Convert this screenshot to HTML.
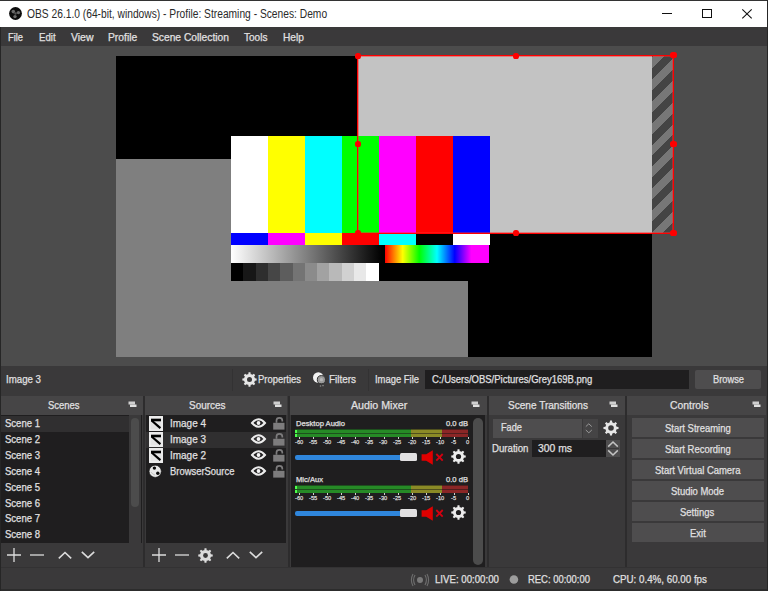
<!DOCTYPE html>
<html><head><meta charset="utf-8"><style>
html,body{margin:0;padding:0;}
body{width:768px;height:591px;position:relative;overflow:hidden;background:#3a393a;font-family:"Liberation Sans",sans-serif;}
body>div{position:absolute;box-sizing:border-box;}
.t{white-space:nowrap;line-height:1.117;transform-origin:0 0;-webkit-text-stroke:0.25px currentColor;}
</style></head><body>
<div style="left:0px;top:0px;width:768px;height:591px;background:#3a393a;"></div>
<div style="left:0px;top:0px;width:768px;height:27px;background:#ffffff;"></div>
<div style="left:0px;top:0px;width:768px;height:1px;background:#333333;"></div>
<div style="left:0px;top:27px;width:768px;height:19px;background:#3a393a;"></div>
<div style="left:0px;top:46px;width:768px;height:320px;background:#4c4c4c;"></div>
<div style="left:116px;top:56px;width:536px;height:301px;background:#000;"></div>
<div style="left:116px;top:159px;width:352px;height:198px;background:#7f7f7f;"></div>
<div style="left:358px;top:56px;width:294px;height:177px;background:#c3c3c3;"></div>
<div style="left:652px;top:56px;width:21px;height:177px;background:repeating-linear-gradient(-45deg,#444444 0 7.7px,#777777 7.7px 15.4px);"></div>
<div style="left:231px;top:136px;width:37px;height:97px;background:#ffffff;"></div>
<div style="left:268px;top:136px;width:37px;height:97px;background:#ffff00;"></div>
<div style="left:305px;top:136px;width:37px;height:97px;background:#00ffff;"></div>
<div style="left:342px;top:136px;width:37px;height:97px;background:#00ff00;"></div>
<div style="left:379px;top:136px;width:37px;height:97px;background:#ff00ff;"></div>
<div style="left:416px;top:136px;width:37px;height:97px;background:#ff0000;"></div>
<div style="left:453px;top:136px;width:37px;height:97px;background:#0000ff;"></div>
<div style="left:231px;top:233px;width:37px;height:12px;background:#0000ff;"></div>
<div style="left:268px;top:233px;width:37px;height:12px;background:#ff00ff;"></div>
<div style="left:305px;top:233px;width:37px;height:12px;background:#ffff00;"></div>
<div style="left:342px;top:233px;width:37px;height:12px;background:#ff0000;"></div>
<div style="left:379px;top:233px;width:37px;height:12px;background:#00ffff;"></div>
<div style="left:416px;top:233px;width:37px;height:12px;background:#000000;"></div>
<div style="left:453px;top:233px;width:37px;height:12px;background:#ffffff;"></div>
<div style="left:231px;top:245px;width:259px;height:36px;background:#000;"></div>
<div style="left:231px;top:245px;width:151px;height:18px;background:linear-gradient(90deg,#fff,#000);"></div>
<div style="left:385px;top:245px;width:104px;height:18px;background:linear-gradient(90deg,#ff0000,#ffff00 17%,#00ff00 33%,#00ffff 50%,#0000ff 67%,#ff00ff 83%,#ff00ff);"></div>
<div style="left:231.00px;top:263px;width:12.5px;height:18px;background:rgb(0,0,0);"></div>
<div style="left:243.30px;top:263px;width:12.5px;height:18px;background:rgb(23,23,23);"></div>
<div style="left:255.60px;top:263px;width:12.5px;height:18px;background:rgb(46,46,46);"></div>
<div style="left:267.90px;top:263px;width:12.5px;height:18px;background:rgb(70,70,70);"></div>
<div style="left:280.20px;top:263px;width:12.5px;height:18px;background:rgb(93,93,93);"></div>
<div style="left:292.50px;top:263px;width:12.5px;height:18px;background:rgb(116,116,116);"></div>
<div style="left:304.80px;top:263px;width:12.5px;height:18px;background:rgb(139,139,139);"></div>
<div style="left:317.10px;top:263px;width:12.5px;height:18px;background:rgb(162,162,162);"></div>
<div style="left:329.40px;top:263px;width:12.5px;height:18px;background:rgb(185,185,185);"></div>
<div style="left:341.70px;top:263px;width:12.5px;height:18px;background:rgb(209,209,209);"></div>
<div style="left:354.00px;top:263px;width:12.5px;height:18px;background:rgb(232,232,232);"></div>
<div style="left:366.30px;top:263px;width:12.5px;height:18px;background:rgb(255,255,255);"></div>
<div style="left:357px;top:55px;width:1px;height:179px;background:#ff0000;"></div>
<div style="left:358px;top:56px;width:1px;height:177px;background:rgba(255,40,40,0.45);"></div>
<div style="left:673px;top:55px;width:1px;height:179px;background:#ff0000;"></div>
<div style="left:672px;top:56px;width:1px;height:177px;background:rgba(255,40,40,0.45);"></div>
<div style="left:357px;top:55px;width:317px;height:1px;background:#ff0000;"></div>
<div style="left:358px;top:56px;width:315px;height:1px;background:rgba(255,40,40,0.45);"></div>
<div style="left:357px;top:233px;width:317px;height:1px;background:#ff0000;"></div>
<div style="left:358px;top:232px;width:315px;height:1px;background:rgba(255,40,40,0.45);"></div>
<div style="left:354.8px;top:52.6px;width:6.4px;height:6.4px;border-radius:40%;background:#ff0000;"></div>
<div style="left:512.8px;top:52.6px;width:6.4px;height:6.4px;border-radius:40%;background:#ff0000;"></div>
<div style="left:670.3px;top:52.1px;width:6.4px;height:6.4px;border-radius:40%;background:#ff0000;"></div>
<div style="left:354.8px;top:140.6px;width:6.4px;height:6.4px;border-radius:40%;background:#ff0000;"></div>
<div style="left:670.3px;top:140.6px;width:6.4px;height:6.4px;border-radius:40%;background:#ff0000;"></div>
<div style="left:354.8px;top:229.6px;width:6.4px;height:6.4px;border-radius:40%;background:#ff0000;"></div>
<div style="left:512.8px;top:229.6px;width:6.4px;height:6.4px;border-radius:40%;background:#ff0000;"></div>
<div style="left:670.3px;top:229.6px;width:6.4px;height:6.4px;border-radius:40%;background:#ff0000;"></div>
<svg style="position:absolute;left:8.5px;top:6.5px;overflow:visible" width="13" height="13"><circle cx="6.5" cy="6.5" r="6.4" fill="#0c0c0c"/><circle cx="4.3" cy="4.6" r="1.8" fill="#6a6a6a"/><circle cx="9.4" cy="5.6" r="1.7" fill="#6a6a6a"/><circle cx="6" cy="9.6" r="1.7" fill="#6a6a6a"/><circle cx="6.5" cy="6.5" r="1.2" fill="#555"/></svg>
<div class="t" style="left:27.00px;top:7.64px;font-size:12px;color:#2a2a2a;transform:scaleX(0.8538);-webkit-text-stroke:0;">OBS 26.1.0 (64-bit, windows) - Profile: Streaming - Scenes: Demo</div>
<div style="left:662px;top:13px;width:10px;height:1px;background:#111;"></div>
<div style="left:702px;top:9px;width:9.5px;height:9px;border:1px solid #111;"></div>
<svg style="position:absolute;left:742px;top:8.5px;overflow:visible" width="10" height="9.5"><path d="M0.3 0.3L9.7 9.3M9.7 0.3L0.3 9.3" stroke="#111" stroke-width="1.1"/></svg>
<div class="t" style="left:8.30px;top:30.84px;font-size:11px;color:#e1e0e1;transform:scaleX(0.8466);">File</div>
<div class="t" style="left:39.20px;top:30.84px;font-size:11px;color:#e1e0e1;transform:scaleX(0.8751);">Edit</div>
<div class="t" style="left:70.80px;top:30.84px;font-size:11px;color:#e1e0e1;transform:scaleX(0.9518);">View</div>
<div class="t" style="left:108.30px;top:30.84px;font-size:11px;color:#e1e0e1;transform:scaleX(0.9363);">Profile</div>
<div class="t" style="left:152.20px;top:30.84px;font-size:11px;color:#e1e0e1;transform:scaleX(0.9323);">Scene Collection</div>
<div class="t" style="left:244.30px;top:30.84px;font-size:11px;color:#e1e0e1;transform:scaleX(0.9109);">Tools</div>
<div class="t" style="left:283.00px;top:30.84px;font-size:11px;color:#e1e0e1;transform:scaleX(0.9282);">Help</div>
<div style="left:0px;top:366px;width:768px;height:30px;background:#3a393a;"></div>
<div class="t" style="left:6.00px;top:372.85px;font-size:11px;color:#e1e0e1;transform:scaleX(0.8798);">Image 3</div>
<div style="left:232px;top:369px;width:1px;height:22px;background:#333233;"></div>
<svg style="position:absolute;left:241.30px;top:370.50px;overflow:visible" width="17" height="17"><path d="M6.72 3.30 L7.32 3.13 L7.54 1.36 L9.46 1.36 L9.68 3.13 L10.28 3.30 L10.92 3.56 L11.47 3.87 L12.87 2.77 L14.23 4.13 L13.13 5.53 L13.44 6.08 L13.70 6.72 L13.87 7.32 L15.64 7.54 L15.64 9.46 L13.87 9.68 L13.70 10.28 L13.44 10.92 L13.13 11.47 L14.23 12.87 L12.87 14.23 L11.47 13.13 L10.92 13.44 L10.28 13.70 L9.68 13.87 L9.46 15.64 L7.54 15.64 L7.32 13.87 L6.72 13.70 L6.08 13.44 L5.53 13.13 L4.13 14.23 L2.77 12.87 L3.87 11.47 L3.56 10.92 L3.30 10.28 L3.13 9.68 L1.36 9.46 L1.36 7.54 L3.13 7.32 L3.30 6.72 L3.56 6.08 L3.87 5.53 L2.77 4.13 L4.13 2.77 L5.53 3.87 L6.08 3.56Z" fill="#e6e6e6"/><circle cx="8.5" cy="8.5" r="2.50" fill="#3a393a"/></svg>
<div class="t" style="left:258.00px;top:372.85px;font-size:11px;color:#e1e0e1;transform:scaleX(0.8573);">Properties</div>
<svg style="position:absolute;left:312px;top:371px;overflow:visible" width="16" height="18"><circle cx="6.3" cy="6.6" r="5.3" fill="#f2f2f2"/><circle cx="9.4" cy="8.7" r="4.1" fill="#9a9a9a" stroke="#303030" stroke-width="1"/><circle cx="9.4" cy="8.7" r="1.6" fill="#b8b8b8"/><circle cx="8.5" cy="15" r="0.8" fill="#8a8a8a"/><circle cx="11" cy="14.6" r="0.8" fill="#8a8a8a"/></svg>
<div class="t" style="left:329.00px;top:372.85px;font-size:11px;color:#e1e0e1;transform:scaleX(0.9019);">Filters</div>
<div style="left:368px;top:369px;width:1px;height:22px;background:#333233;"></div>
<div class="t" style="left:374.50px;top:372.85px;font-size:11px;color:#e1e0e1;transform:scaleX(0.8564);">Image File</div>
<div style="left:425px;top:370px;width:264px;height:19px;background:#1f1e1f;"></div>
<div class="t" style="left:432.00px;top:372.85px;font-size:11px;color:#e1e0e1;transform:scaleX(0.8630);">C:/Users/OBS/Pictures/Grey169B.png</div>
<div style="left:695px;top:370px;width:66px;height:19px;background:#4e4d4e;border-radius:2px;"></div>
<div class="t" style="left:713.00px;top:372.85px;font-size:11px;color:#e1e0e1;transform:scaleX(0.8450);">Browse</div>
<div style="left:1px;top:396px;width:142px;height:19px;background:#464546;"></div>
<div class="t" style="left:47.65px;top:398.55px;font-size:11px;color:#e1e0e1;transform:scaleX(0.8579);">Scenes</div>
<svg style="position:absolute;left:128px;top:401px;overflow:visible" width="9" height="8"><rect x="0.5" y="0.5" width="6.5" height="3" fill="#cfcfcf"/><rect x="2" y="3.5" width="6.5" height="2.5" fill="#e0e0e0"/></svg>
<div style="left:145px;top:396px;width:142px;height:19px;background:#464546;"></div>
<div class="t" style="left:189.45px;top:398.55px;font-size:11px;color:#e1e0e1;transform:scaleX(0.9040);">Sources</div>
<svg style="position:absolute;left:273px;top:401px;overflow:visible" width="9" height="8"><rect x="0.5" y="0.5" width="6.5" height="3" fill="#cfcfcf"/><rect x="2" y="3.5" width="6.5" height="2.5" fill="#e0e0e0"/></svg>
<div style="left:290px;top:396px;width:197px;height:19px;background:#464546;"></div>
<div class="t" style="left:351.35px;top:398.55px;font-size:11px;color:#e1e0e1;transform:scaleX(0.9691);">Audio Mixer</div>
<svg style="position:absolute;left:471px;top:401px;overflow:visible" width="9" height="8"><rect x="0.5" y="0.5" width="6.5" height="3" fill="#cfcfcf"/><rect x="2" y="3.5" width="6.5" height="2.5" fill="#e0e0e0"/></svg>
<div style="left:489px;top:396px;width:136px;height:19px;background:#464546;"></div>
<div class="t" style="left:508.40px;top:398.55px;font-size:11px;color:#e1e0e1;transform:scaleX(0.9144);">Scene Transitions</div>
<svg style="position:absolute;left:608.5px;top:401px;overflow:visible" width="9" height="8"><rect x="0.5" y="0.5" width="6.5" height="3" fill="#cfcfcf"/><rect x="2" y="3.5" width="6.5" height="2.5" fill="#e0e0e0"/></svg>
<div style="left:627px;top:396px;width:139px;height:19px;background:#464546;"></div>
<div class="t" style="left:669.90px;top:398.55px;font-size:11px;color:#e1e0e1;transform:scaleX(0.9422);">Controls</div>
<svg style="position:absolute;left:752px;top:401px;overflow:visible" width="9" height="8"><rect x="0.5" y="0.5" width="6.5" height="3" fill="#cfcfcf"/><rect x="2" y="3.5" width="6.5" height="2.5" fill="#e0e0e0"/></svg>
<div style="left:143px;top:396px;width:2px;height:171px;background:#2d2c2d;"></div>
<div style="left:288px;top:396px;width:2px;height:171px;background:#2d2c2d;"></div>
<div style="left:487px;top:396px;width:2px;height:171px;background:#2d2c2d;"></div>
<div style="left:625px;top:396px;width:2px;height:171px;background:#2d2c2d;"></div>
<div style="left:1px;top:415px;width:141px;height:128px;background:#1f1e1f;"></div>
<div style="left:1px;top:416px;width:128px;height:15.85px;background:#302f30;"></div>
<div style="left:129px;top:415px;width:12px;height:128px;background:#3a393a;"></div>
<div style="left:131px;top:418px;width:8px;height:89px;background:#4c4c4c;border-radius:4px;"></div>
<div class="t" style="left:4.60px;top:417.35px;font-size:11px;color:#e1e0e1;transform:scaleX(0.8662);">Scene 1</div>
<div class="t" style="left:4.60px;top:433.20px;font-size:11px;color:#e1e0e1;transform:scaleX(0.8662);">Scene 2</div>
<div class="t" style="left:4.60px;top:449.05px;font-size:11px;color:#e1e0e1;transform:scaleX(0.8662);">Scene 3</div>
<div class="t" style="left:4.60px;top:464.90px;font-size:11px;color:#e1e0e1;transform:scaleX(0.8662);">Scene 4</div>
<div class="t" style="left:4.60px;top:480.75px;font-size:11px;color:#e1e0e1;transform:scaleX(0.8662);">Scene 5</div>
<div class="t" style="left:4.60px;top:496.60px;font-size:11px;color:#e1e0e1;transform:scaleX(0.8662);">Scene 6</div>
<div class="t" style="left:4.60px;top:512.44px;font-size:11px;color:#e1e0e1;transform:scaleX(0.8662);">Scene 7</div>
<div class="t" style="left:4.60px;top:528.29px;font-size:11px;color:#e1e0e1;transform:scaleX(0.8662);">Scene 8</div>
<svg style="position:absolute;left:7px;top:548px;overflow:visible" width="14" height="14"><path d="M7 0V14M0 7H14" stroke="#dcdcdc" stroke-width="1.3"/></svg>
<svg style="position:absolute;left:30px;top:548px;overflow:visible" width="14" height="14"><path d="M0 7H14" stroke="#dcdcdc" stroke-width="1.3"/></svg>
<svg style="position:absolute;left:58px;top:548px;overflow:visible" width="14" height="14"><path d="M0.8 10.3L7 4.5L13.2 10.3" fill="none" stroke="#dcdcdc" stroke-width="1.6"/></svg>
<svg style="position:absolute;left:81px;top:548px;overflow:visible" width="14" height="14"><path d="M0.8 3.9L7 9.7L13.2 3.9" fill="none" stroke="#dcdcdc" stroke-width="1.6"/></svg>
<div style="left:146px;top:415px;width:140px;height:128px;background:#1f1e1f;"></div>
<div style="left:146px;top:431.85px;width:140px;height:15.85px;background:#302f30;"></div>
<svg style="position:absolute;left:149px;top:416.0px;overflow:visible" width="14" height="15"><rect x="0" y="0" width="14" height="15" fill="#e4e4e4"/><path d="M2 4H12" stroke="#000" stroke-width="2.6"/><path d="M2.6 4.5L11.4 12.2" stroke="#000" stroke-width="2.2"/><rect x="1" y="1" width="12" height="13" fill="none" stroke="#f2f2f2" stroke-width="1"/></svg>
<div class="t" style="left:170.40px;top:417.15px;font-size:11px;color:#e1e0e1;transform:scaleX(0.9049);">Image 4</div>
<svg style="position:absolute;left:149px;top:431.85px;overflow:visible" width="14" height="15"><rect x="0" y="0" width="14" height="15" fill="#e4e4e4"/><path d="M2 4H12" stroke="#000" stroke-width="2.6"/><path d="M2.6 4.5L11.4 12.2" stroke="#000" stroke-width="2.2"/><rect x="1" y="1" width="12" height="13" fill="none" stroke="#f2f2f2" stroke-width="1"/></svg>
<div class="t" style="left:170.40px;top:433.00px;font-size:11px;color:#e1e0e1;transform:scaleX(0.9049);">Image 3</div>
<svg style="position:absolute;left:149px;top:447.7px;overflow:visible" width="14" height="15"><rect x="0" y="0" width="14" height="15" fill="#e4e4e4"/><path d="M2 4H12" stroke="#000" stroke-width="2.6"/><path d="M2.6 4.5L11.4 12.2" stroke="#000" stroke-width="2.2"/><rect x="1" y="1" width="12" height="13" fill="none" stroke="#f2f2f2" stroke-width="1"/></svg>
<div class="t" style="left:170.40px;top:448.85px;font-size:11px;color:#e1e0e1;transform:scaleX(0.9049);">Image 2</div>
<svg style="position:absolute;left:148px;top:464px;overflow:visible" width="14" height="14"><circle cx="7.2" cy="7.3" r="6.1" fill="#e8e8e8" stroke="#111" stroke-width="0.6"/><circle cx="6.4" cy="4.1" r="1.7" fill="#0a0a0a"/><circle cx="9.8" cy="9.3" r="1.7" fill="#0a0a0a"/><path d="M3 8 Q4.5 10.5 7 11" fill="none" stroke="#bbb" stroke-width="0.8"/></svg>
<div class="t" style="left:170.40px;top:464.75px;font-size:11px;color:#e1e0e1;transform:scaleX(0.8562);">BrowserSource</div>
<svg style="position:absolute;left:251.10000000000002px;top:418.4px;overflow:visible" width="15" height="10"><path d="M1 5 Q7.5 -2.4 14 5 Q7.5 12.4 1 5Z" fill="none" stroke="#ececec" stroke-width="2"/><circle cx="7.5" cy="5" r="1.9" fill="#f4f4f4"/></svg>
<svg style="position:absolute;left:273px;top:417.0px;overflow:visible" width="12" height="13"><rect x="0.2" y="5.8" width="11.3" height="6.8" fill="#7d7c7d"/><path d="M3.5 5.8V3.4A2.9 2.6 0 0 1 9.3 3.4V4.5" fill="none" stroke="#7d7c7d" stroke-width="1.7"/></svg>
<svg style="position:absolute;left:251.10000000000002px;top:434.25px;overflow:visible" width="15" height="10"><path d="M1 5 Q7.5 -2.4 14 5 Q7.5 12.4 1 5Z" fill="none" stroke="#ececec" stroke-width="2"/><circle cx="7.5" cy="5" r="1.9" fill="#f4f4f4"/></svg>
<svg style="position:absolute;left:273px;top:432.85px;overflow:visible" width="12" height="13"><rect x="0.2" y="5.8" width="11.3" height="6.8" fill="#7d7c7d"/><path d="M3.5 5.8V3.4A2.9 2.6 0 0 1 9.3 3.4V4.5" fill="none" stroke="#7d7c7d" stroke-width="1.7"/></svg>
<svg style="position:absolute;left:251.10000000000002px;top:450.09999999999997px;overflow:visible" width="15" height="10"><path d="M1 5 Q7.5 -2.4 14 5 Q7.5 12.4 1 5Z" fill="none" stroke="#ececec" stroke-width="2"/><circle cx="7.5" cy="5" r="1.9" fill="#f4f4f4"/></svg>
<svg style="position:absolute;left:273px;top:448.7px;overflow:visible" width="12" height="13"><rect x="0.2" y="5.8" width="11.3" height="6.8" fill="#7d7c7d"/><path d="M3.5 5.8V3.4A2.9 2.6 0 0 1 9.3 3.4V4.5" fill="none" stroke="#7d7c7d" stroke-width="1.7"/></svg>
<svg style="position:absolute;left:251.10000000000002px;top:465.95px;overflow:visible" width="15" height="10"><path d="M1 5 Q7.5 -2.4 14 5 Q7.5 12.4 1 5Z" fill="none" stroke="#ececec" stroke-width="2"/><circle cx="7.5" cy="5" r="1.9" fill="#f4f4f4"/></svg>
<svg style="position:absolute;left:273px;top:464.55px;overflow:visible" width="12" height="13"><rect x="0.2" y="5.8" width="11.3" height="6.8" fill="#7d7c7d"/><path d="M3.5 5.8V3.4A2.9 2.6 0 0 1 9.3 3.4V4.5" fill="none" stroke="#7d7c7d" stroke-width="1.7"/></svg>
<svg style="position:absolute;left:151.5px;top:548px;overflow:visible" width="14" height="14"><path d="M7 0V14M0 7H14" stroke="#dcdcdc" stroke-width="1.3"/></svg>
<svg style="position:absolute;left:175px;top:548px;overflow:visible" width="14" height="14"><path d="M0 7H14" stroke="#dcdcdc" stroke-width="1.3"/></svg>
<svg style="position:absolute;left:196.50px;top:546.50px;overflow:visible" width="17" height="17"><path d="M6.72 3.30 L7.32 3.13 L7.53 1.27 L9.47 1.27 L9.68 3.13 L10.28 3.30 L10.92 3.56 L11.47 3.87 L12.93 2.70 L14.30 4.07 L13.13 5.53 L13.44 6.08 L13.70 6.72 L13.87 7.32 L15.73 7.53 L15.73 9.47 L13.87 9.68 L13.70 10.28 L13.44 10.92 L13.13 11.47 L14.30 12.93 L12.93 14.30 L11.47 13.13 L10.92 13.44 L10.28 13.70 L9.68 13.87 L9.47 15.73 L7.53 15.73 L7.32 13.87 L6.72 13.70 L6.08 13.44 L5.53 13.13 L4.07 14.30 L2.70 12.93 L3.87 11.47 L3.56 10.92 L3.30 10.28 L3.13 9.68 L1.27 9.47 L1.27 7.53 L3.13 7.32 L3.30 6.72 L3.56 6.08 L3.87 5.53 L2.70 4.07 L4.07 2.70 L5.53 3.87 L6.08 3.56Z" fill="#dcdcdc"/><circle cx="8.5" cy="8.5" r="2.40" fill="#3a393a"/></svg>
<svg style="position:absolute;left:226px;top:548px;overflow:visible" width="14" height="14"><path d="M0.8 10.3L7 4.5L13.2 10.3" fill="none" stroke="#dcdcdc" stroke-width="1.6"/></svg>
<svg style="position:absolute;left:249px;top:548px;overflow:visible" width="14" height="14"><path d="M0.8 3.9L7 9.7L13.2 3.9" fill="none" stroke="#dcdcdc" stroke-width="1.6"/></svg>
<div style="left:291px;top:415px;width:194px;height:152px;background:#1f1e1f;"></div>
<div style="left:473px;top:418px;width:10px;height:147px;background:#4c4c4c;border-radius:5px;"></div>
<div class="t" style="left:296.00px;top:419.76px;font-size:8px;color:#e1e0e1;transform:scaleX(0.9500);">Desktop Audio</div>
<div class="t" style="left:445.52px;top:419.76px;font-size:8px;color:#e1e0e1;transform:scaleX(0.9500);">0.0 dB</div>
<div style="left:295px;top:429px;width:173px;height:8px;background:linear-gradient(90deg,#1d4f1d 0,#1d4f1d 116px,#4f4f1d 116px,#4f4f1d 147px,#4f1d1d 147px);"></div>
<div style="left:295px;top:430px;width:173px;height:3px;background:linear-gradient(90deg,#268a26 0,#268a26 116px,#8a8a26 116px,#8a8a26 147px,#8a2626 147px);"></div>
<div style="left:295px;top:434px;width:173px;height:3px;background:linear-gradient(90deg,#268a26 0,#268a26 116px,#8a8a26 116px,#8a8a26 147px,#8a2626 147px);"></div>
<div style="left:295px;top:430px;width:2px;height:3px;background:#4cff4c;"></div>
<div style="left:295px;top:434px;width:2px;height:3px;background:#4cff4c;"></div>
<div style="left:299px;top:437px;width:1px;height:2px;background:#d0d0d0;"></div>
<div class="t" style="left:294.87px;top:439.07px;font-size:6px;color:#dadada;transform:scaleX(0.9500);">-60</div>
<div style="left:313px;top:437px;width:1px;height:2px;background:#d0d0d0;"></div>
<div class="t" style="left:308.96px;top:439.07px;font-size:6px;color:#dadada;transform:scaleX(0.9500);">-55</div>
<div style="left:327px;top:437px;width:1px;height:2px;background:#d0d0d0;"></div>
<div class="t" style="left:323.04px;top:439.07px;font-size:6px;color:#dadada;transform:scaleX(0.9500);">-50</div>
<div style="left:341px;top:437px;width:1px;height:2px;background:#d0d0d0;"></div>
<div class="t" style="left:337.12px;top:439.07px;font-size:6px;color:#dadada;transform:scaleX(0.9500);">-45</div>
<div style="left:355px;top:437px;width:1px;height:2px;background:#d0d0d0;"></div>
<div class="t" style="left:351.21px;top:439.07px;font-size:6px;color:#dadada;transform:scaleX(0.9500);">-40</div>
<div style="left:369px;top:437px;width:1px;height:2px;background:#d0d0d0;"></div>
<div class="t" style="left:365.29px;top:439.07px;font-size:6px;color:#dadada;transform:scaleX(0.9500);">-35</div>
<div style="left:384px;top:437px;width:1px;height:2px;background:#d0d0d0;"></div>
<div class="t" style="left:379.37px;top:439.07px;font-size:6px;color:#dadada;transform:scaleX(0.9500);">-30</div>
<div style="left:398px;top:437px;width:1px;height:2px;background:#d0d0d0;"></div>
<div class="t" style="left:393.46px;top:439.07px;font-size:6px;color:#dadada;transform:scaleX(0.9500);">-25</div>
<div style="left:412px;top:437px;width:1px;height:2px;background:#d0d0d0;"></div>
<div class="t" style="left:407.54px;top:439.07px;font-size:6px;color:#dadada;transform:scaleX(0.9500);">-20</div>
<div style="left:426px;top:437px;width:1px;height:2px;background:#d0d0d0;"></div>
<div class="t" style="left:421.62px;top:439.07px;font-size:6px;color:#dadada;transform:scaleX(0.9500);">-15</div>
<div style="left:440px;top:437px;width:1px;height:2px;background:#d0d0d0;"></div>
<div class="t" style="left:435.71px;top:439.07px;font-size:6px;color:#dadada;transform:scaleX(0.9500);">-10</div>
<div style="left:454px;top:437px;width:1px;height:2px;background:#d0d0d0;"></div>
<div class="t" style="left:451.38px;top:439.07px;font-size:6px;color:#dadada;transform:scaleX(0.9500);">-5</div>
<div style="left:468px;top:437px;width:1px;height:2px;background:#d0d0d0;"></div>
<div class="t" style="left:466.41px;top:439.07px;font-size:6px;color:#dadada;transform:scaleX(0.9500);">0</div>
<div style="left:295px;top:455px;width:122px;height:4.6px;background:#2f86dc;border-radius:2px;"></div>
<div style="left:400.3px;top:452.7px;width:16.4px;height:8.3px;background:#e1e0e1;border-radius:1.5px;"></div>
<svg style="position:absolute;left:421px;top:449.5px;overflow:visible" width="24" height="15"><path d="M0.6 4.2H5.2L11.8 0.3V14.7L5.2 10.8H0.6Z" fill="#e00000"/><path d="M15.3 4L21.7 10.6M21.7 4L15.3 10.6" stroke="#d40010" stroke-width="1.8"/></svg>
<svg style="position:absolute;left:449.50px;top:448.10px;overflow:visible" width="17" height="17"><path d="M6.72 3.30 L7.32 3.13 L7.53 1.27 L9.47 1.27 L9.68 3.13 L10.28 3.30 L10.92 3.56 L11.47 3.87 L12.93 2.70 L14.30 4.07 L13.13 5.53 L13.44 6.08 L13.70 6.72 L13.87 7.32 L15.73 7.53 L15.73 9.47 L13.87 9.68 L13.70 10.28 L13.44 10.92 L13.13 11.47 L14.30 12.93 L12.93 14.30 L11.47 13.13 L10.92 13.44 L10.28 13.70 L9.68 13.87 L9.47 15.73 L7.53 15.73 L7.32 13.87 L6.72 13.70 L6.08 13.44 L5.53 13.13 L4.07 14.30 L2.70 12.93 L3.87 11.47 L3.56 10.92 L3.30 10.28 L3.13 9.68 L1.27 9.47 L1.27 7.53 L3.13 7.32 L3.30 6.72 L3.56 6.08 L3.87 5.53 L2.70 4.07 L4.07 2.70 L5.53 3.87 L6.08 3.56Z" fill="#ececec"/><circle cx="8.5" cy="8.5" r="2.60" fill="#1f1e1f"/></svg>
<div class="t" style="left:296.00px;top:475.76px;font-size:8px;color:#e1e0e1;transform:scaleX(0.9500);">Mic/Aux</div>
<div class="t" style="left:445.52px;top:475.76px;font-size:8px;color:#e1e0e1;transform:scaleX(0.9500);">0.0 dB</div>
<div style="left:295px;top:485px;width:173px;height:8px;background:linear-gradient(90deg,#1d4f1d 0,#1d4f1d 116px,#4f4f1d 116px,#4f4f1d 147px,#4f1d1d 147px);"></div>
<div style="left:295px;top:486px;width:173px;height:3px;background:linear-gradient(90deg,#268a26 0,#268a26 116px,#8a8a26 116px,#8a8a26 147px,#8a2626 147px);"></div>
<div style="left:295px;top:490px;width:173px;height:3px;background:linear-gradient(90deg,#268a26 0,#268a26 116px,#8a8a26 116px,#8a8a26 147px,#8a2626 147px);"></div>
<div style="left:295px;top:486px;width:2px;height:3px;background:#4cff4c;"></div>
<div style="left:295px;top:490px;width:2px;height:3px;background:#4cff4c;"></div>
<div style="left:299px;top:493px;width:1px;height:2px;background:#d0d0d0;"></div>
<div class="t" style="left:294.87px;top:495.07px;font-size:6px;color:#dadada;transform:scaleX(0.9500);">-60</div>
<div style="left:313px;top:493px;width:1px;height:2px;background:#d0d0d0;"></div>
<div class="t" style="left:308.96px;top:495.07px;font-size:6px;color:#dadada;transform:scaleX(0.9500);">-55</div>
<div style="left:327px;top:493px;width:1px;height:2px;background:#d0d0d0;"></div>
<div class="t" style="left:323.04px;top:495.07px;font-size:6px;color:#dadada;transform:scaleX(0.9500);">-50</div>
<div style="left:341px;top:493px;width:1px;height:2px;background:#d0d0d0;"></div>
<div class="t" style="left:337.12px;top:495.07px;font-size:6px;color:#dadada;transform:scaleX(0.9500);">-45</div>
<div style="left:355px;top:493px;width:1px;height:2px;background:#d0d0d0;"></div>
<div class="t" style="left:351.21px;top:495.07px;font-size:6px;color:#dadada;transform:scaleX(0.9500);">-40</div>
<div style="left:369px;top:493px;width:1px;height:2px;background:#d0d0d0;"></div>
<div class="t" style="left:365.29px;top:495.07px;font-size:6px;color:#dadada;transform:scaleX(0.9500);">-35</div>
<div style="left:384px;top:493px;width:1px;height:2px;background:#d0d0d0;"></div>
<div class="t" style="left:379.37px;top:495.07px;font-size:6px;color:#dadada;transform:scaleX(0.9500);">-30</div>
<div style="left:398px;top:493px;width:1px;height:2px;background:#d0d0d0;"></div>
<div class="t" style="left:393.46px;top:495.07px;font-size:6px;color:#dadada;transform:scaleX(0.9500);">-25</div>
<div style="left:412px;top:493px;width:1px;height:2px;background:#d0d0d0;"></div>
<div class="t" style="left:407.54px;top:495.07px;font-size:6px;color:#dadada;transform:scaleX(0.9500);">-20</div>
<div style="left:426px;top:493px;width:1px;height:2px;background:#d0d0d0;"></div>
<div class="t" style="left:421.62px;top:495.07px;font-size:6px;color:#dadada;transform:scaleX(0.9500);">-15</div>
<div style="left:440px;top:493px;width:1px;height:2px;background:#d0d0d0;"></div>
<div class="t" style="left:435.71px;top:495.07px;font-size:6px;color:#dadada;transform:scaleX(0.9500);">-10</div>
<div style="left:454px;top:493px;width:1px;height:2px;background:#d0d0d0;"></div>
<div class="t" style="left:451.38px;top:495.07px;font-size:6px;color:#dadada;transform:scaleX(0.9500);">-5</div>
<div style="left:468px;top:493px;width:1px;height:2px;background:#d0d0d0;"></div>
<div class="t" style="left:466.41px;top:495.07px;font-size:6px;color:#dadada;transform:scaleX(0.9500);">0</div>
<div style="left:295px;top:511px;width:122px;height:4.6px;background:#2f86dc;border-radius:2px;"></div>
<div style="left:400.3px;top:508.7px;width:16.4px;height:8.3px;background:#e1e0e1;border-radius:1.5px;"></div>
<svg style="position:absolute;left:421px;top:505.5px;overflow:visible" width="24" height="15"><path d="M0.6 4.2H5.2L11.8 0.3V14.7L5.2 10.8H0.6Z" fill="#e00000"/><path d="M15.3 4L21.7 10.6M21.7 4L15.3 10.6" stroke="#d40010" stroke-width="1.8"/></svg>
<svg style="position:absolute;left:449.50px;top:504.10px;overflow:visible" width="17" height="17"><path d="M6.72 3.30 L7.32 3.13 L7.53 1.27 L9.47 1.27 L9.68 3.13 L10.28 3.30 L10.92 3.56 L11.47 3.87 L12.93 2.70 L14.30 4.07 L13.13 5.53 L13.44 6.08 L13.70 6.72 L13.87 7.32 L15.73 7.53 L15.73 9.47 L13.87 9.68 L13.70 10.28 L13.44 10.92 L13.13 11.47 L14.30 12.93 L12.93 14.30 L11.47 13.13 L10.92 13.44 L10.28 13.70 L9.68 13.87 L9.47 15.73 L7.53 15.73 L7.32 13.87 L6.72 13.70 L6.08 13.44 L5.53 13.13 L4.07 14.30 L2.70 12.93 L3.87 11.47 L3.56 10.92 L3.30 10.28 L3.13 9.68 L1.27 9.47 L1.27 7.53 L3.13 7.32 L3.30 6.72 L3.56 6.08 L3.87 5.53 L2.70 4.07 L4.07 2.70 L5.53 3.87 L6.08 3.56Z" fill="#ececec"/><circle cx="8.5" cy="8.5" r="2.60" fill="#1f1e1f"/></svg>
<div style="left:492.5px;top:418.6px;width:105px;height:19px;background:#4e4d4e;"></div>
<div style="left:582.5px;top:418.6px;width:15px;height:19px;background:#454445;"></div>
<div style="left:582px;top:418.6px;width:1px;height:19px;background:#3a393a;"></div>
<div class="t" style="left:500.80px;top:421.05px;font-size:11px;color:#e1e0e1;transform:scaleX(0.8369);">Fade</div>
<svg style="position:absolute;left:585px;top:423px;overflow:visible" width="8" height="11"><path d="M0.8 3.6L3.8 0.8L6.8 3.6M0.8 7L3.8 9.8L6.8 7" fill="none" stroke="#9a9a9a" stroke-width="1"/></svg>
<svg style="position:absolute;left:601.50px;top:419.00px;overflow:visible" width="18" height="18"><path d="M7.15 3.61 L7.78 3.43 L7.99 1.47 L10.01 1.47 L10.22 3.43 L10.85 3.61 L11.51 3.88 L12.07 4.20 L13.61 2.96 L15.04 4.39 L13.80 5.93 L14.12 6.49 L14.39 7.15 L14.57 7.78 L16.53 7.99 L16.53 10.01 L14.57 10.22 L14.39 10.85 L14.12 11.51 L13.80 12.07 L15.04 13.61 L13.61 15.04 L12.07 13.80 L11.51 14.12 L10.85 14.39 L10.22 14.57 L10.01 16.53 L7.99 16.53 L7.78 14.57 L7.15 14.39 L6.49 14.12 L5.93 13.80 L4.39 15.04 L2.96 13.61 L4.20 12.07 L3.88 11.51 L3.61 10.85 L3.43 10.22 L1.47 10.01 L1.47 7.99 L3.43 7.78 L3.61 7.15 L3.88 6.49 L4.20 5.93 L2.96 4.39 L4.39 2.96 L5.93 4.20 L6.49 3.88Z" fill="#e6e6e6"/><circle cx="9.0" cy="9.0" r="2.80" fill="#3a393a"/></svg>
<div class="t" style="left:491.60px;top:441.85px;font-size:11px;color:#e1e0e1;transform:scaleX(0.8775);">Duration</div>
<div style="left:532px;top:439.5px;width:73.5px;height:17.5px;background:#1f1e1f;"></div>
<div class="t" style="left:538.00px;top:441.85px;font-size:11px;color:#e1e0e1;transform:scaleX(0.9420);">300 ms</div>
<div style="left:605.5px;top:439.5px;width:14px;height:17.5px;background:#4e4d4e;"></div>
<svg style="position:absolute;left:606px;top:440px;overflow:visible" width="14" height="17"><path d="M2.2 6.6L7 2L11.8 6.6M2.2 10.4L7 15L11.8 10.4" fill="none" stroke="#c4c4c4" stroke-width="1.5"/><path d="M1 8.5H13" stroke="#3a393a" stroke-width="1"/></svg>
<div style="left:632px;top:418px;width:131.5px;height:19px;background:#4e4d4e;"></div>
<div class="t" style="left:664.62px;top:421.55px;font-size:11px;color:#e1e0e1;transform:scaleX(0.8600);">Start Streaming</div>
<div style="left:632px;top:439px;width:131.5px;height:19px;background:#4e4d4e;"></div>
<div class="t" style="left:664.62px;top:442.55px;font-size:11px;color:#e1e0e1;transform:scaleX(0.8600);">Start Recording</div>
<div style="left:632px;top:460px;width:131.5px;height:19px;background:#4e4d4e;"></div>
<div class="t" style="left:654.72px;top:463.55px;font-size:11px;color:#e1e0e1;transform:scaleX(0.8600);">Start Virtual Camera</div>
<div style="left:632px;top:481px;width:131.5px;height:19px;background:#4e4d4e;"></div>
<div class="t" style="left:670.92px;top:484.55px;font-size:11px;color:#e1e0e1;transform:scaleX(0.8600);">Studio Mode</div>
<div style="left:632px;top:502px;width:131.5px;height:19px;background:#4e4d4e;"></div>
<div class="t" style="left:680.39px;top:505.55px;font-size:11px;color:#e1e0e1;transform:scaleX(0.8600);">Settings</div>
<div style="left:632px;top:523px;width:131.5px;height:19px;background:#4e4d4e;"></div>
<div class="t" style="left:689.61px;top:526.54px;font-size:11px;color:#e1e0e1;transform:scaleX(0.8600);">Exit</div>
<div style="left:0px;top:567px;width:768px;height:24px;background:#3a393a;"></div>
<div style="left:0px;top:567px;width:768px;height:1px;background:#333233;"></div>
<svg style="position:absolute;left:411px;top:574px;overflow:visible" width="18" height="12"><circle cx="9" cy="6" r="3" fill="#7a7a7a"/><path d="M4 1 Q1.2 6 4 11 M2 0 Q-1.2 6 2 12 M14 1 Q16.8 6 14 11 M16 0 Q19.2 6 16 12" fill="none" stroke="#6e6e6e" stroke-width="1.1"/></svg>
<div class="t" style="left:435.00px;top:572.75px;font-size:11px;color:#e1e0e1;transform:scaleX(0.8782);">LIVE: 00:00:00</div>
<svg style="position:absolute;left:509px;top:575px;overflow:visible" width="10" height="10"><circle cx="4.9" cy="4.5" r="4.3" fill="#9c9c9c"/></svg>
<div class="t" style="left:528.00px;top:572.75px;font-size:11px;color:#e1e0e1;transform:scaleX(0.8585);">REC: 00:00:00</div>
<div class="t" style="left:613.00px;top:572.75px;font-size:11px;color:#e1e0e1;transform:scaleX(0.8878);">CPU: 0.4%, 60.00 fps</div>
<div style="left:0px;top:589px;width:768px;height:2px;background:#2c2c2c;"></div>
<div style="left:0px;top:27px;width:1px;height:564px;background:#262626;"></div>
<div style="left:767px;top:0px;width:1px;height:591px;background:#262626;"></div>
</body></html>
